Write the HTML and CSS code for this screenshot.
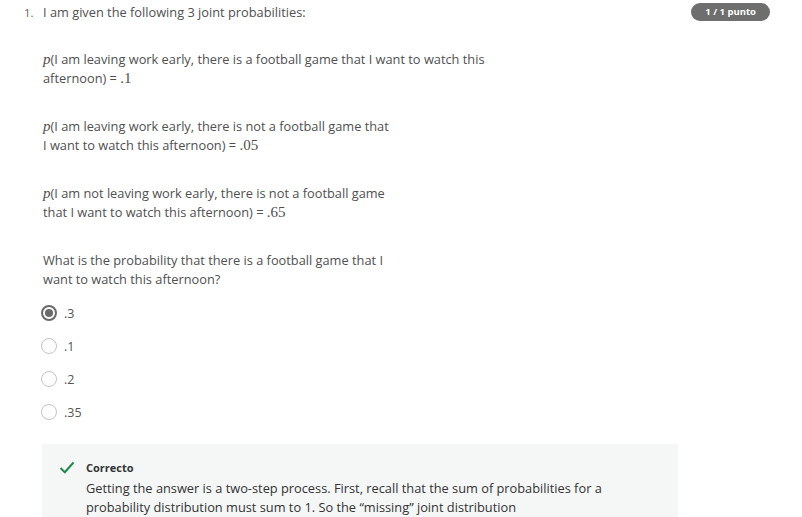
FILE: index.html
```html
<!DOCTYPE html>
<html>
<head>
<meta charset="utf-8">
<link rel="stylesheet" href="styles.css">
</head>
<body>
<div class="question">
  <div class="qnum">1.</div>
  <div class="qbody">
    <p class="lead">I am given the following 3 joint probabilities:</p>
    <p class="prob"><span class="mi">p</span>(I am leaving work early, there is a football game that I want to watch this<br>afternoon) = <span class="mn">.1</span></p>
    <p class="prob"><span class="mi">p</span>(I am leaving work early, there is not a football game that<br>I want to watch this afternoon) = <span class="mn">.05</span></p>
    <p class="prob"><span class="mi">p</span>(I am not leaving work early, there is not a football game<br>that I want to watch this afternoon) = <span class="mn">.65</span></p>
    <p class="ask">What is the probability that there is a football game that I<br>want to watch this afternoon?</p>
    <div class="options">
      <div class="opt"><span class="radio checked"></span><span class="olabel">.3</span></div>
      <div class="opt"><span class="radio"></span><span class="olabel">.1</span></div>
      <div class="opt"><span class="radio"></span><span class="olabel">.2</span></div>
      <div class="opt"><span class="radio"></span><span class="olabel">.35</span></div>
    </div>
    <div class="feedback">
      <div class="fhead">
        <svg class="check" width="16" height="13" viewBox="0 0 16 13"><path d="M1.5 7 L5.8 11.2 L14.5 1.5" fill="none" stroke="#1f8a4c" stroke-width="2"/></svg>
        <span class="ftitle">Correcto</span>
      </div>
      <p class="ftext">Getting the answer is a two-step process. First, recall that the sum of probabilities for a<br>probability distribution must sum to 1. So the “missing” joint distribution</p>
    </div>
  </div>
  <div class="badge">1 / 1 punto</div>
</div>
</body>
</html>
```
FILE: styles.css
```css
html, body {
  margin: 0;
  padding: 0;
  background: #ffffff;
}
body {
  font-family: "Open Sans", "Liberation Sans", sans-serif;
  color: #505050;
  font-size: 12.8px;
  overflow: hidden;
  height: 517px;
}
.question {
  display: flex;
  align-items: flex-start;
  padding: 3px 32px 0 24px;
}
.qnum {
  width: 19px;
  flex: none;
  font-size: 11.5px;
  line-height: 19px;
  color: #666;
}
.qbody {
  flex: 1;
}
p {
  margin: 0;
}
.lead {
  line-height: 19px;
  margin-bottom: 28px;
}
.prob {
  line-height: 19px;
  margin-bottom: 29px;
}
.mi {
  font-family: "Liberation Serif", "DejaVu Serif", serif;
  font-style: italic;
  font-size: 15px;
}
.mn {
  font-family: "Liberation Serif", "DejaVu Serif", serif;
  font-size: 15px;
}
.ask {
  line-height: 19px;
  margin-bottom: 14px;
}
.options {
  display: flex;
  flex-direction: column;
  gap: 13px;
  margin-bottom: 22px;
}
.opt {
  display: flex;
  align-items: center;
  gap: 7px;
  height: 20px;
}
.radio {
  width: 16px;
  height: 16px;
  border: 1.5px solid #c4c4c4;
  border-radius: 50%;
  box-sizing: border-box;
  position: relative;
  margin-left: -2px;
}
.radio.checked {
  border: 2px solid #6a6a6a;
  background: #fff;
}
.radio.checked::after {
  content: "";
  position: absolute;
  left: 2px;
  top: 2px;
  width: 8px;
  height: 8px;
  border-radius: 50%;
  background: #6a6a6a;
}
.olabel {
  font-size: 12.5px;
  color: #555;
}
.feedback {
  background: #f5f7f7;
  margin-left: -1px;
  width: 636px;
  padding: 14px 0 10px 17px;
  box-sizing: border-box;
}
.fhead {
  display: flex;
  align-items: center;
  gap: 11px;
  height: 18px;
}
.ftitle {
  font-size: 11px;
  font-weight: 700;
  color: #333;
}
.ftext {
  margin-left: 27px;
  margin-top: 3px;
  font-size: 12.8px;
  line-height: 19px;
  color: #333;
}
.badge {
  flex: none;
  background: #6e6e6e;
  color: #fff;
  font-size: 9.5px;
  font-weight: 700;
  border-radius: 10px;
  height: 18px;
  line-height: 18px;
  padding: 0 14px;
  margin-top: 0;
}
```
